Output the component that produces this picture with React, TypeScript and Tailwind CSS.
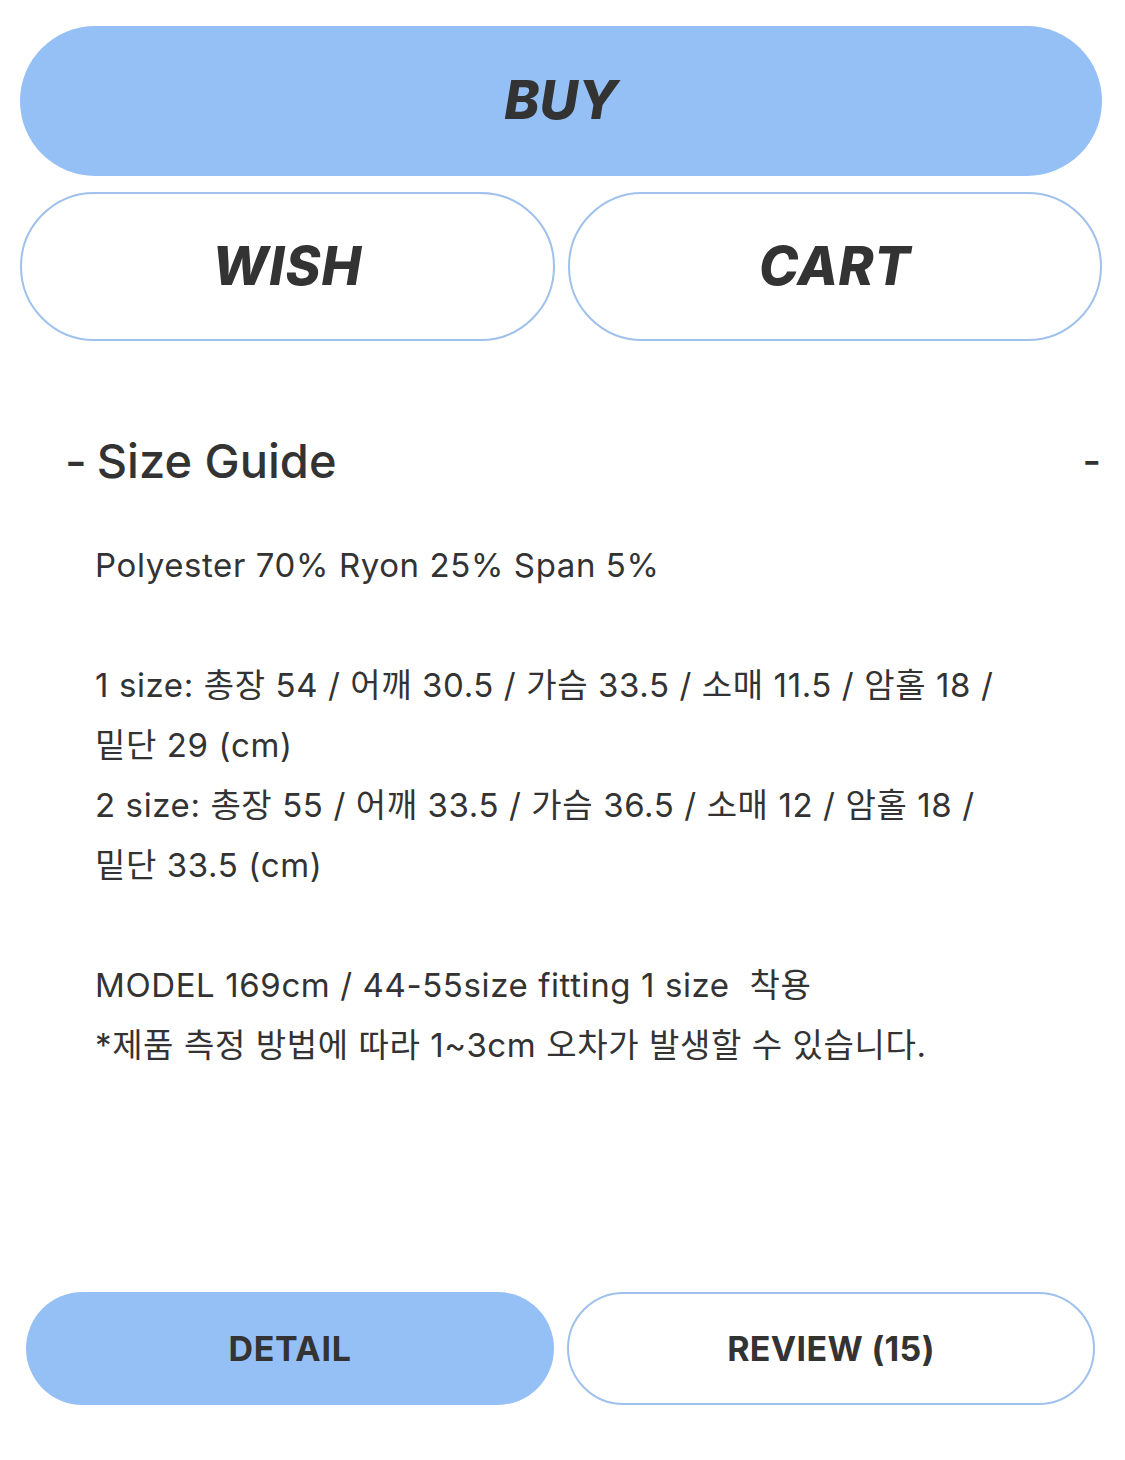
export default function App() {
  const font = { fontFamily: '"Inter", "Noto Sans CJK KR", sans-serif' };
  return (
    <div className="w-[1125px] h-[1460px] bg-white text-[#333333]" style={font}>
      <div className="pl-5 pr-[23px] pt-[26px] flex flex-col gap-4">
        <button className="h-[150px] w-full rounded-full bg-[#95c0f5] text-[53px] font-extrabold italic">
          BUY
        </button>
        <div className="grid grid-cols-2 gap-[13px]">
          <button className="h-[149px] rounded-full border-2 border-[#9fc1ec] bg-white text-[53px] font-extrabold italic tracking-[0.02em]">
            WISH
          </button>
          <button className="h-[149px] rounded-full border-2 border-[#9fc1ec] bg-white text-[53px] font-extrabold italic tracking-[0.01em]">
            CART
          </button>
        </div>
      </div>

      <div className="mt-[88px] pl-[65px] pr-[24px] flex items-center justify-between">
        <h2 className="flex items-center gap-[10px] text-[47px] font-medium leading-[64px]">
          <span>-</span>
          <span>Size Guide</span>
        </h2>
        <span className="text-[40px] font-medium">-</span>
      </div>

      <div className="mt-[42px] pl-[95px] text-[33px] leading-[60px] font-normal tracking-[0.6px]">
        <p>Polyester 70% Ryon 25% Span 5%</p>
        <p>&nbsp;</p>
        <p>1 size: 총장 54 / 어깨 30.5 / 가슴 33.5 / 소매 11.5 / 암홀 18 /</p>
        <p>밑단 29 (cm)</p>
        <p>2 size: 총장 55 / 어깨 33.5 / 가슴 36.5 / 소매 12 / 암홀 18 /</p>
        <p>밑단 33.5 (cm)</p>
        <p>&nbsp;</p>
        <p>MODEL 169cm / 44-55size fitting 1 size&nbsp; 착용</p>
        <p>*제품 측정 방법에 따라 1~3cm 오차가 발생할 수 있습니다.</p>
      </div>

      <div className="mt-[217px] pl-[26px] pr-[30px] grid grid-cols-2 gap-[13px]">
        <button className="h-[113px] rounded-full bg-[#95c0f5] text-[34px] font-bold tracking-[0.02em]">DETAIL</button>
        <button className="h-[113px] rounded-full border-2 border-[#9fc1ec] bg-white text-[34px] font-bold tracking-[0.01em]">
          REVIEW (15)
        </button>
      </div>
    </div>
  );
}
